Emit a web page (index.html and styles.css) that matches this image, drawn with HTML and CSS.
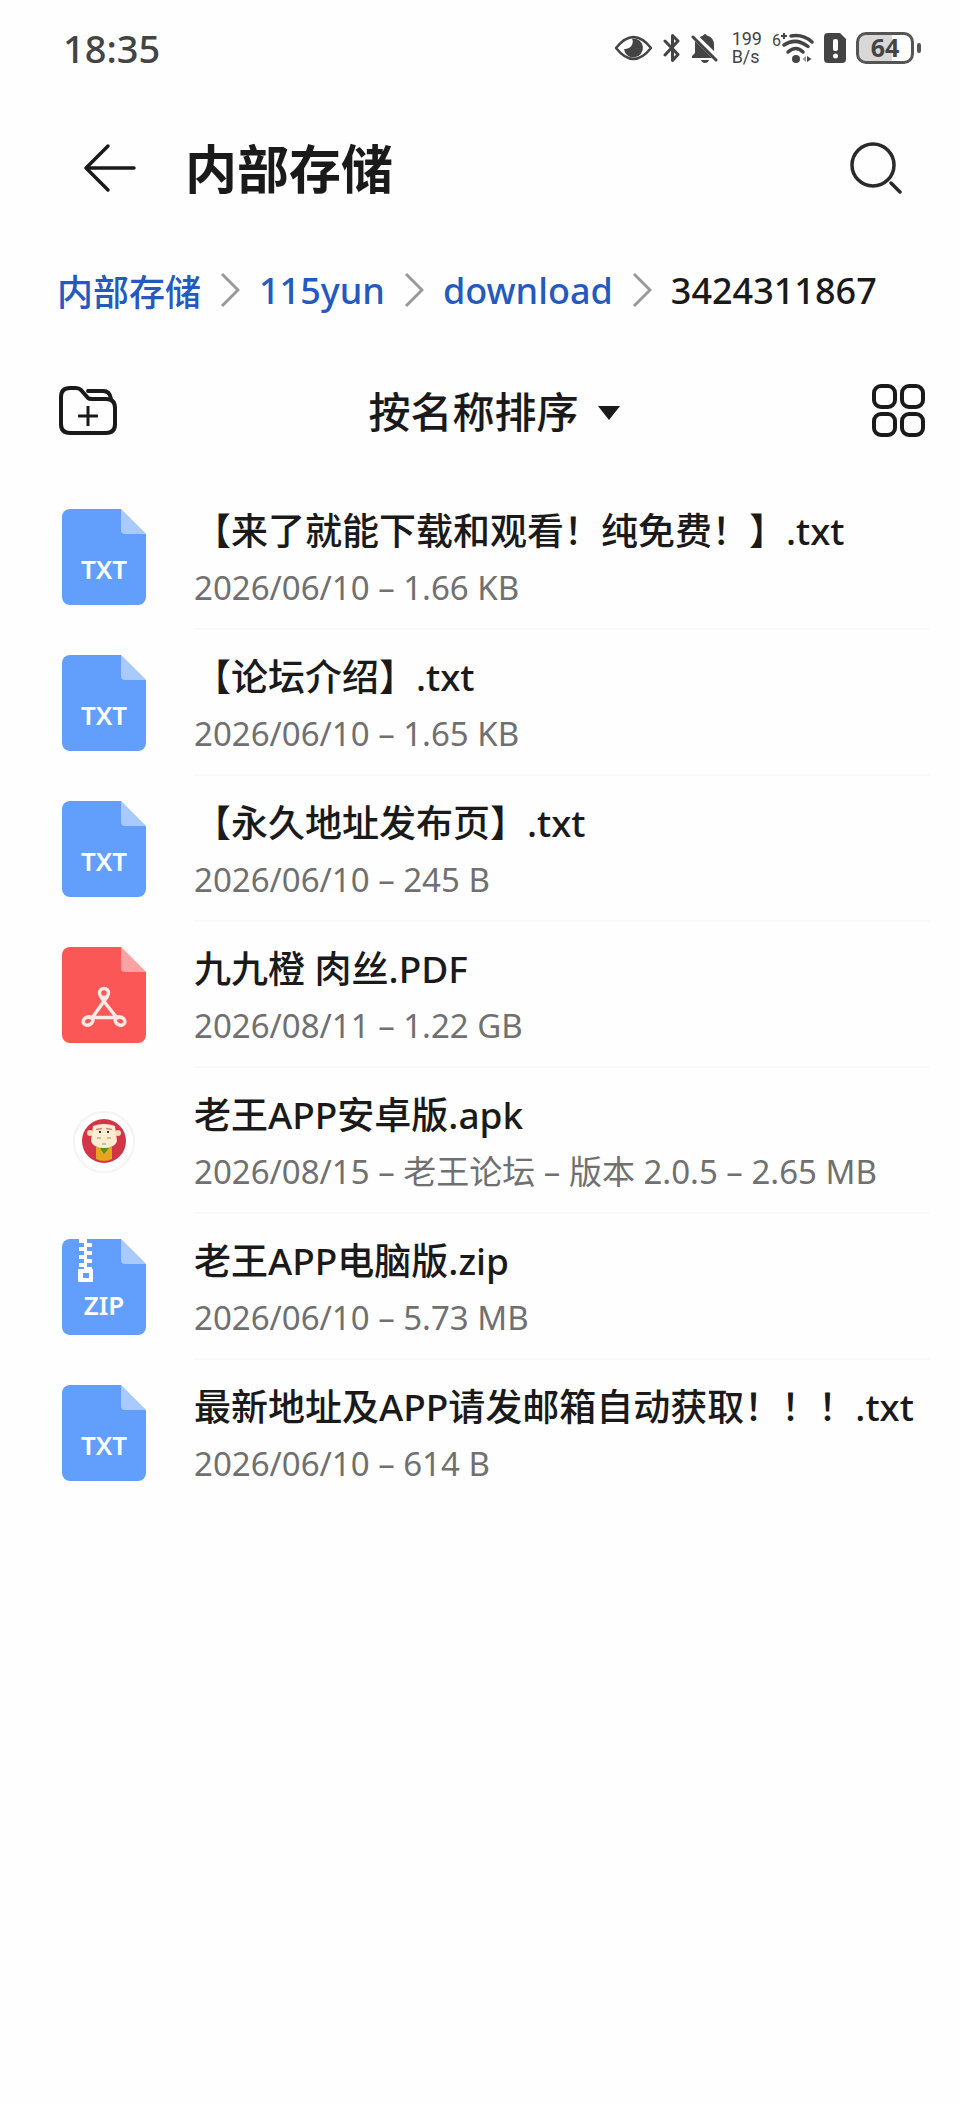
FILE: index.html
```html
<!DOCTYPE html>
<html lang="zh-CN">
  <head>
    <meta charset="UTF-8" />
    <meta name="viewport" content="width=device-width, initial-scale=1" />
    <title>内部存储</title>
    <link rel="stylesheet" href="styles.css">
  </head>
  <body>
    <!-- page shape shared by the file icons -->
    <svg class="sprite" aria-hidden="true">
      <symbol id="page" viewBox="0 0 84 96">
        <path fill="currentColor" d="M8 0H59L84 25V88a8 8 0 0 1-8 8H8a8 8 0 0 1-8-8V8a8 8 0 0 1 8-8z" />
        <path fill="#fff" fill-opacity=".45" d="M59 0L84 25H63a4 4 0 0 1-4-4z" />
      </symbol>
    </svg>

    <div class="status-bar">
      <span class="clock">18:35</span>
      <div class="status-icons">
        <svg width="39" height="28" viewBox="0 0 39 28">
          <path d="M2 14Q19.500-8 37 14Q19.500 36 2 14z" fill="none" stroke="#444" stroke-width="2.500" stroke-linejoin="round" />
          <path d="M18 4.500A9.500 9.500 0 1 1 10 15A7.500 7.500 0 0 0 18 4.500z" fill="#444" />
        </svg>
        <svg width="18" height="30" viewBox="0 0 18 30">
          <path d="M2 8L15 21.500L9.500 27.500V2.500L15 8L2 22" fill="none" stroke="#444" stroke-width="3" stroke-linecap="round" stroke-linejoin="round" />
        </svg>
        <svg width="27" height="30" viewBox="0 0 27 30">
          <path d="M9 4Q11 3 12 2.500Q14-.5 16 2.500Q23 4.500 23 12V18L9 4.500zM4 8L21 25H1V23L4 20zM10 27H18Q17 30 14 30T10 27z" fill="#444" />
          <path d="M2 4L25 27" stroke="#444" stroke-width="3" stroke-linecap="round" />
        </svg>
        <span class="net-speed">199<br>B/s</span>
        <svg class="wifi" width="42" height="32" viewBox="0 0 42 32">
          <text class="wifi-gen" x="0" y="14">6</text>
          <path d="M9 4H15M12 1V7" stroke="#444" stroke-width="2" />
          <path d="M19 4Q31 2 40 10M12 13Q24 5 36 14.500M16 20Q24 13 31 20" fill="none" stroke="#444" stroke-width="3.500" stroke-linecap="round" />
          <circle cx="24" cy="27" r="4" fill="#444" />
          <path d="M30.500 27L34 24V30z" fill="#999" />
          <path d="M35 24L39.500 27L35 30z" fill="#444" />
        </svg>
        <svg width="22" height="30" viewBox="0 0 22 30">
          <path d="M4 0H16L22 6V26a4 4 0 0 1-4 4H4a4 4 0 0 1-4-4V4a4 4 0 0 1 4-4z" fill="#444" />
          <rect x="9" y="6" width="5" height="12" rx="2" fill="#fff" />
          <circle cx="11.500" cy="23" r="2.500" fill="#fff" />
        </svg>
        <div class="battery"><span class="battery-level">64</span></div>
      </div>
    </div>

    <header class="header">
      <button class="icon-button" aria-label="返回">
        <svg width="54" height="50" viewBox="0 0 54 50">
          <path d="M25 3L3 25L25 47M3 25H51" fill="none" stroke="#1a1a1a" stroke-width="3.500" stroke-linecap="round" stroke-linejoin="round" />
        </svg>
      </button>
      <h1>内部存储</h1>
      <button class="icon-button" aria-label="搜索">
        <svg width="52" height="52" viewBox="0 0 52 52">
          <circle cx="23" cy="23" r="21" fill="none" stroke="#2a2a2a" stroke-width="3.500" />
          <path d="M41 41L50 50" stroke="#2a2a2a" stroke-width="3.500" stroke-linecap="round" />
        </svg>
      </button>
    </header>

    <nav class="breadcrumb" aria-label="路径">
      <a href="#">内部存储</a>
      <svg width="20" height="36" viewBox="0 0 20 36"><path d="M2 2L18 18L2 34" /></svg>
      <a href="#">115yun</a>
      <svg width="20" height="36" viewBox="0 0 20 36"><path d="M2 2L18 18L2 34" /></svg>
      <a href="#">download</a>
      <svg width="20" height="36" viewBox="0 0 20 36"><path d="M2 2L18 18L2 34" /></svg>
      <span>3424311867</span>
    </nav>

    <div class="toolbar">
      <button class="icon-button" aria-label="新建文件夹">
        <svg width="58" height="50" viewBox="0 0 58 50" fill="none" stroke="#1a1a1a" stroke-width="4" stroke-linecap="round" stroke-linejoin="round">
          <path d="M2 11Q2 2 11 2H17Q20 2 22 4L29 12Q30 13 33 13H47Q56 13 56 22V38Q56 47 47 47H11Q2 47 2 38z" />
          <path d="M29 5H44Q51 5 52 13" />
          <path d="M19 30H39M29 20V40" stroke-width="3" stroke-linecap="butt" />
        </svg>
      </button>
      <button class="sort-button">
        按名称排序
        <svg width="24" height="16" viewBox="0 0 24 16"><path d="M1 1H23L12 15z" fill="#1a1a1a" /></svg>
      </button>
      <button class="icon-button" aria-label="网格视图">
        <svg width="54" height="54" viewBox="0 0 54 54" fill="none" stroke="#1a1a1a" stroke-width="4">
          <rect x="2" y="2" width="21" height="21" rx="7" />
          <rect x="30" y="2" width="21" height="21" rx="7" />
          <rect x="2" y="30" width="21" height="21" rx="7" />
          <rect x="30" y="30" width="21" height="21" rx="7" />
        </svg>
      </button>
    </div>

    <ul class="file-list">
      <li class="file">
        <svg class="file-icon" viewBox="0 0 84 96">
          <use href="#page" />
          <text class="icon-label" x="42" y="70">TXT</text>
        </svg>
        <div class="file-info">
          <div class="file-name">【来了就能下载和观看！纯免费！】.txt</div>
          <div class="file-meta">2026/06/10 – 1.66 KB</div>
        </div>
      </li>
      <li class="file">
        <svg class="file-icon" viewBox="0 0 84 96">
          <use href="#page" />
          <text class="icon-label" x="42" y="70">TXT</text>
        </svg>
        <div class="file-info">
          <div class="file-name">【论坛介绍】.txt</div>
          <div class="file-meta">2026/06/10 – 1.65 KB</div>
        </div>
      </li>
      <li class="file">
        <svg class="file-icon" viewBox="0 0 84 96">
          <use href="#page" />
          <text class="icon-label" x="42" y="70">TXT</text>
        </svg>
        <div class="file-info">
          <div class="file-name">【永久地址发布页】.txt</div>
          <div class="file-meta">2026/06/10 – 245 B</div>
        </div>
      </li>
      <li class="file">
        <svg class="file-icon pdf" viewBox="0 0 84 96">
          <use href="#page" />
          <g fill="none" stroke="#ffeae6" stroke-width="3.500" stroke-linecap="round" stroke-linejoin="round">
            <circle cx="42" cy="46" r="4.500" />
            <ellipse cx="26" cy="74" rx="5" ry="4" transform="rotate(-25 26 74)" />
            <ellipse cx="58" cy="74" rx="5" ry="4" transform="rotate(25 58 74)" />
            <path d="M39 50L44 57L55 71M45 50L40 57L30 71M27 70.500H57" />
          </g>
        </svg>
        <div class="file-info">
          <div class="file-name">九九橙 肉丝.PDF</div>
          <div class="file-meta">2026/08/11 – 1.22 GB</div>
        </div>
      </li>
      <li class="file">
        <svg class="file-icon" viewBox="0 0 84 96">
          <circle cx="42" cy="49" r="30" fill="#fff" stroke="#f3f3f3" stroke-width="2" />
          <circle cx="42" cy="48" r="22" fill="#d23548" />
          <path d="M34 54H50V66Q42 70 34 66z" fill="#e5a51c" />
          <path d="M38 55L42 61L47 55z" fill="#5c8a2c" />
          <circle cx="28" cy="40" r="3" fill="#f6dcb8" />
          <circle cx="56" cy="40" r="3" fill="#f6dcb8" />
          <path d="M31 33Q42 29 53 33L55 48Q53 55 42 55T29 48z" fill="#fbeed0" />
          <path d="M34 36.500L40 35.500M44 35.500L50 36.500" stroke="#d98478" stroke-width="1.500" />
          <path d="M37 39H39M45 39H47" stroke="#333" stroke-width="2" />
          <path d="M35 45H39M45 45H49M40 51H44" stroke="#c7a58a" stroke-width="1.500" />
        </svg>
        <div class="file-info">
          <div class="file-name">老王APP安卓版.apk</div>
          <div class="file-meta">2026/08/15 – 老王论坛 – 版本 2.0.5 – 2.65 MB</div>
        </div>
      </li>
      <li class="file">
        <svg class="file-icon" viewBox="0 0 84 96">
          <use href="#page" />
          <path fill="#fff" d="M17 0H23V4H17zM23 4H30V8H23zM17 8H23V12H17zM23 12H30V16H23zM17 16H23V20H17zM23 20H30V24H23zM17 24H23V28H17zM23 28H30V31H23zM22 0H25V31H22z" />
          <path fill="#fff" fill-rule="evenodd" d="M16 30H31V43H16zM21 34V39H27V34z" />
          <text class="icon-label" x="42" y="76">ZIP</text>
        </svg>
        <div class="file-info">
          <div class="file-name">老王APP电脑版.zip</div>
          <div class="file-meta">2026/06/10 – 5.73 MB</div>
        </div>
      </li>
      <li class="file">
        <svg class="file-icon" viewBox="0 0 84 96">
          <use href="#page" />
          <text class="icon-label" x="42" y="70">TXT</text>
        </svg>
        <div class="file-info">
          <div class="file-name">最新地址及APP请发邮箱自动获取！！！.txt</div>
          <div class="file-meta">2026/06/10 – 614 B</div>
        </div>
      </li>
    </ul>
  </body>
</html>
```
FILE: styles.css
```css
* {
  box-sizing: border-box;
}
body {
  margin: 0;
  min-height: 100vh;
  background: #fefefe;
  color: #1a1a1a;
  font-family: "Noto Sans", "Noto Sans CJK SC", sans-serif;
  font-size: 37px;
}
svg {
  display: block;
  flex: none;
}
button {
  padding: 0;
  border: none;
  background: none;
  color: inherit;
  font: inherit;
  cursor: pointer;
}
.sprite {
  position: absolute;
  width: 0;
  height: 0;
}

.status-bar {
  display: flex;
  align-items: center;
  justify-content: space-between;
  height: 96px;
  padding: 0 39px 0 63px;
  color: #444;
}
.clock {
  font-size: 38px;
  font-weight: 500;
}
.status-icons {
  display: flex;
  align-items: center;
  gap: 10px;
}
.net-speed {
  font-family: Roboto, sans-serif;
  font-size: 18px;
  line-height: 18px;
  margin-left: 4px;
}
.wifi {
  overflow: visible;
}
.wifi-gen {
  fill: #444;
  font-family: Roboto, sans-serif;
  font-size: 16px;
}
.battery {
  display: flex;
  align-items: center;
  gap: 3px;
}
.battery::after {
  content: "";
  width: 4px;
  height: 10px;
  border-radius: 2px;
  background: #555;
}
.battery-level {
  width: 58px;
  height: 32px;
  border: 3px solid #555;
  border-radius: 10px;
  background: linear-gradient(90deg, #d8d8d8 64%, #fefefe 64%);
  font-size: 25px;
  font-weight: 700;
  line-height: 24px;
  text-align: center;
}

.header {
  display: flex;
  align-items: center;
  height: 144px;
  padding: 0 58px 0 83px;
}
.header h1 {
  flex: 1;
  margin: 0 0 0 48px;
  padding-bottom: 4px;
  font-size: 52px;
  font-weight: 700;
}

.breadcrumb {
  display: flex;
  align-items: center;
  gap: 19px;
  height: 100px;
  padding: 0 57px;
  font-size: 36px;
  font-weight: 500;
}
.breadcrumb a {
  color: #2459bd;
  text-decoration: none;
}
.breadcrumb path {
  fill: none;
  stroke: #999;
  stroke-width: 3;
}

.toolbar {
  display: flex;
  align-items: center;
  justify-content: space-between;
  height: 142px;
  padding: 0 34px 0 59px;
}
.sort-button {
  display: flex;
  align-items: center;
  gap: 18px;
  padding-bottom: 4px;
  font-size: 42px;
  font-weight: 500;
}
.sort-button svg {
  margin-top: 8px;
}

.file-list {
  margin: 0;
  padding: 2px 30px 0 62px;
  list-style: none;
}
.file {
  display: flex;
  align-items: center;
  gap: 48px;
}
.file-icon {
  width: 84px;
  height: 96px;
  color: #629ffc;
}
.file-icon.pdf {
  color: #fc5757;
}
.file-info {
  flex: 1;
  height: 146px;
  padding-top: 20px;
  border-bottom: 2px solid #f9f9f9;
}
.file:last-child .file-info {
  border-bottom-color: transparent;
}
.file-name {
  line-height: 54px;
  font-weight: 500;
}
.file-meta {
  color: #707070;
  font-size: 33px;
  line-height: 60px;
}
.icon-label {
  fill: #fff;
  font-size: 26px;
  font-weight: 600;
  text-anchor: middle;
}
```
